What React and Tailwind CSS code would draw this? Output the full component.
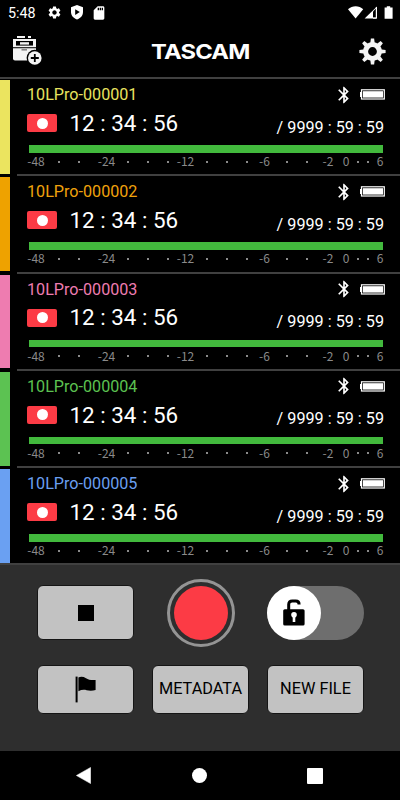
import { MdBluetooth, MdSdCard, MdSettings } from 'react-icons/md';

const recorders = [
  { name: '10LPro-000001', text: 'text-[#e8e35f]', strip: 'bg-[#ebe45f]' },
  { name: '10LPro-000002', text: 'text-[#f0a20c]', strip: 'bg-[#eea200]' },
  { name: '10LPro-000003', text: 'text-[#ee7cb0]', strip: 'bg-[#ee7cb0]' },
  { name: '10LPro-000004', text: 'text-[#5cc251]', strip: 'bg-[#5cc252]' },
  { name: '10LPro-000005', text: 'text-[#6a9ff0]', strip: 'bg-[#6aa0f2]' },
];

/* Level scale: label and centre, measured from the left end of the scale */
const marks = [
  ['-48', 9], ['·', 31.5], ['·', 51.5],
  ['-24', 79.5], ['·', 100.5], ['·', 120.5], ['·', 140.5],
  ['-12', 158.5], ['·', 180], ['·', 200], ['·', 220],
  ['-6', 237.5], ['·', 259.5], ['·', 279.5],
  ['-2', 301], ['0', 319], ['·', 331], ['·', 341], ['6', 353],
];

const teeth = [0, 45, 90, 135, 180, 225, 270, 315];

/* ── Status bar icons ── */
const ShieldIcon = () => (
  <svg width="12" height="15" viewBox="0 0 12 15" aria-hidden="true">
    <path d="M6 0L12 2.3V7C12 10.6 9.4 13.4 6 14.4C2.6 13.4 0 10.6 0 7V2.3Z" fill="#fff" />
    <path d="M4.2 4.3V9.9L8.8 7.1Z" fill="#000" />
  </svg>
);

const SignalIcons = () => (
  <svg width="46" height="14" viewBox="0 0 46 14" aria-hidden="true">
    <path d="M0 3.2C4.3 -0.8 11 -0.8 15.2 3.2L7.6 12.6Z" fill="#fff" />
    <path d="M29 0.4V12.6H16.6Z" fill="#fff" />
    <path d="M25 5.4V11.6H28V2.6Z" fill="#000" />
    <path d="M28.3 1V12.2H25" stroke="#fff" strokeWidth="1" fill="none" />
    <path d="M38.8 0.2H42.2V1.6H44.6V12.8H36.6V1.6H38.8Z" fill="#fff" />
  </svg>
);

/* ── Header icons ── */
const AddDeviceIcon = () => (
  <svg width="30" height="30" viewBox="0 0 30 30" aria-hidden="true">
    <path d="M4 0H12V2H4ZM15 0H18V2H15Z" fill="#f4f4f4" />
    <path d="M0 3H23V11.2H0Z" fill="#f4f4f4" />
    <path d="M3 5H20V9.6H3Z" fill="#000" />
    <path d="M7 6.2H16V8.6H7Z" fill="#f4f4f4" />
    <path d="M0 12.2H23V24.6H2Q0 24.6 0 22.6Z" fill="#f4f4f4" />
    <path d="M8.5 13H14V14.6H8.5Z" fill="#888" />
    <circle cx="21.8" cy="22" r="8.2" fill="#000" />
    <circle cx="21.8" cy="22" r="6.8" fill="#f4f4f4" />
    <path d="M21.8 18V26M17.8 22H25.8" stroke="#000" strokeWidth="1.8" />
  </svg>
);

const GearIcon = () => (
  <svg width="27" height="27" viewBox="-13.5 -13.5 27 27" aria-hidden="true">
    {teeth.map((angle) => (
      <path key={angle} d="M-2.3 -7.5L-1.6 -13.1H1.6L2.3 -7.5Z" fill="#f4f4f4" transform={`rotate(${angle})`} />
    ))}
    <circle r="6.9" fill="none" stroke="#f4f4f4" strokeWidth="5" />
  </svg>
);

const Logo = () => (
  <svg width="108" height="24" viewBox="0 0 108 24" role="img" aria-label="TASCAM">
    <text
      x="4" y="19.5"
      textLength="98.5"
      lengthAdjust="spacingAndGlyphs"
      fill="#fff"
      className="font-['Inter',sans-serif] text-[20.5px] font-bold tracking-[-0.7px]"
    >
      TASCAM
    </text>
  </svg>
);

/* ── Panel icons ── */
const BatteryIcon = () => (
  <svg width="25" height="11" viewBox="0 0 25 11" aria-hidden="true">
    <path d="M0 3H1.5V8H0Z" fill="#fff" />
    <rect x="1.5" y="0.8" width="22.8" height="9.2" fill="none" stroke="#fff" strokeWidth="1.2" />
    <rect x="2.8" y="2.2" width="20.2" height="6.4" fill="#fff" />
  </svg>
);

const FlagIcon = () => (
  <svg width="22" height="27" viewBox="0 0 22 27" aria-hidden="true">
    <path d="M0.6 0.6H2.6V26.4H0.6Z" />
    <path d="M3.4 1.4C6 0.3 8.6 0.7 11 2.2C13.4 3.8 16.4 4.4 20.6 4V14C17.6 14.9 14.4 14.9 11.6 14.2C8.8 13.5 6 13.9 3.4 15.2Z" />
  </svg>
);

const UnlockIcon = () => (
  <svg width="22" height="27" viewBox="0 0 22 27" aria-hidden="true">
    <path d="M5.7 11V5.6C5.7 3.2 7 1.9 9.2 1.9H12.8C15 1.9 16.1 3.2 16.1 5.4" fill="none" stroke="#000" strokeWidth="3" />
    <rect x="0.2" y="10.2" width="21.4" height="16.4" rx="1.6" />
    <circle cx="11" cy="15.8" r="2.8" fill="#fff" />
    <path d="M9.7 16H12.3V23H9.7Z" fill="#fff" />
  </svg>
);

const RecorderRow = ({ name, text, strip }) => (
  <div className="flex h-[97.25px] shrink-0">
    <div className={`mt-[1px] mb-[2.5px] w-[10px] ${strip}`} />
    <div className="ml-[7px] flex-1 border-b-2 border-[#404040] pl-[10px] pr-[16px]">
      <div className="flex h-[32px] items-center justify-between">
        <span className={`text-[16.15px] leading-5 ${text}`}>{name}</span>
        <div className="-mr-[1px] flex items-center gap-[6px] pb-[1px] text-white">
          <MdBluetooth size={20} />
          <BatteryIcon />
        </div>
      </div>
      <div className="flex h-[34px] items-start text-white">
        <span className="mt-[3px] flex h-[18px] w-[30px] items-center justify-center rounded-[2px] bg-[#fc3b45]">
          <span className="h-[11px] w-[11px] rounded-full bg-white" />
        </span>
        <span className="ml-[12.5px] mt-[0.9px] text-[22.4px] leading-[22px]">12 : 34 : 56</span>
        <span className="ml-auto mt-[6.5px] text-[16.2px] leading-5">/ 9999 : 59 : 59</span>
      </div>
      <div className="ml-[2px] mr-[1.5px] h-[7.5px] bg-[#42b93d]" />
      <div className="flex pt-[0.5px] font-['Noto_Sans_CJK_JP',sans-serif] text-[12px] leading-[16px] text-[#8a8a8a]">
        {marks.map(([label, at], i) => (
          <span
            key={i}
            className="flex w-0 justify-center"
            style={{ marginLeft: at - (i ? marks[i - 1][1] : 0) }}
          >
            {label === '·' ? <span className="mt-[7.5px] h-[2px] w-[2px] shrink-0 bg-[#8a8a8a]" /> : label}
          </span>
        ))}
      </div>
    </div>
  </div>
);

const PanelButton = ({ label, className, children }) => (
  <button
    aria-label={label}
    className={`flex w-[97px] items-center justify-center whitespace-nowrap rounded-[6px] border border-[#151515] bg-[#c2c2c2] text-[16.3px] text-black ${className}`}
  >
    {children}
  </button>
);

const App = () => (
  <div className="flex h-[800px] w-[400px] flex-col overflow-hidden bg-black font-['Roboto',sans-serif]">
    {/* Status bar */}
    <div className="flex h-[25px] items-center pl-[8px] pr-[4px] text-white">
      <span className="pt-[1px] text-[14.3px] leading-none">5:48</span>
      <MdSettings size={15} className="ml-[11px]" />
      <span className="ml-[9px]"><ShieldIcon /></span>
      <MdSdCard size={16} className="ml-[8px]" />
      <span className="ml-auto mr-[2px]"><SignalIcons /></span>
    </div>

    {/* Header */}
    <div className="flex h-[54px] items-center justify-between border-b-2 border-[#404040] pl-[13px] pr-[14px]">
      <AddDeviceIcon />
      <Logo />
      <GearIcon />
    </div>

    {/* Recorders */}
    <div className="flex h-[484px] flex-col overflow-hidden">
      {recorders.map((recorder) => (
        <RecorderRow key={recorder.name} {...recorder} />
      ))}
    </div>

    {/* Transport controls */}
    <div className="flex h-[188px] flex-col border-t-2 border-[#404040] bg-[#2e2e2e] pl-[37px] pr-[36px]">
      <div className="mt-[13.5px] flex h-[68px] items-center justify-between">
        <PanelButton label="Stop" className="h-[55px]">
          <span className="h-[16px] w-[16px] bg-black" />
        </PanelButton>
        <button
          aria-label="Record"
          className="flex h-[68px] w-[68px] items-center justify-center rounded-full border-[3px] border-[#949494]"
        >
          <span className="h-[54px] w-[54px] rounded-full bg-[#fc3b45]" />
        </button>
        <div className="flex h-[54px] w-[97px] rounded-full bg-[#6e6e6e]">
          <span className="flex h-[54px] w-[54px] items-center justify-center rounded-full bg-white">
            <UnlockIcon />
          </span>
        </div>
      </div>
      <div className="mt-[18.5px] flex justify-between">
        <PanelButton label="Mark" className="h-[49px]">
          <FlagIcon />
        </PanelButton>
        <PanelButton className="h-[49px]">METADATA</PanelButton>
        <PanelButton className="h-[49px]">NEW FILE</PanelButton>
      </div>
    </div>

    {/* Navigation bar */}
    <div className="flex h-[49px] items-center justify-between bg-black pl-[76px] pr-[77px]">
      <svg width="15" height="17" viewBox="0 0 15 17" aria-hidden="true">
        <path d="M14.6 0.4V16.6L0.4 8.5Z" fill="#fff" stroke="#fff" strokeWidth="0.5" strokeLinejoin="round" />
      </svg>
      <span className="ml-[1px] h-[15px] w-[15px] rounded-full bg-white" />
      <span className="h-[16px] w-[16px] rounded-[1px] bg-white" />
    </div>
  </div>
);

export default App;
